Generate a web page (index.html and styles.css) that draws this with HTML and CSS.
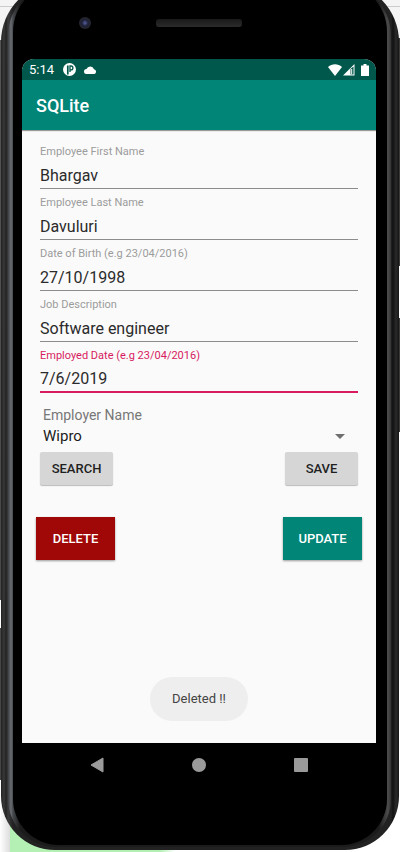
FILE: index.html
```html
<!DOCTYPE html>
<html lang="en">
<head>
<meta charset="utf-8">
<meta name="viewport" content="width=device-width, initial-scale=1">
<title>SQLite</title>
<link rel="stylesheet" href="styles.css">
</head>
<body>
<div class="desk">
  <div class="phone">
    <div class="rim">
      <div class="glass">
        <div class="top-bezel">
          <span class="camera"></span>
          <span class="speaker"></span>
        </div>
        <div class="screen">
          <div class="status">
            <span class="time">5:14</span>
            <svg width="13" height="13" viewBox="0 0 13 13" aria-hidden="true"><circle cx="6.5" cy="6.5" r="6.5" fill="#fff"/><path d="M4.800 11.500V2.500" fill="none" stroke="#00574b" stroke-width="1.700"/><path d="M7 9V3h1a1.900 1.900 0 0 1 0 3.800H7" fill="none" stroke="#00574b" stroke-width="1.300"/></svg>
            <svg width="13" height="8" viewBox="0 0 13 8" aria-hidden="true"><path d="M2.500 8a2.500 2.500 0 0 1 0-5A4 4 0 0 1 10 3.200A2.500 2.500 0 0 1 10.500 8Z" fill="#fff"/></svg>
            <span class="signals">
              <svg width="14" height="12" viewBox="0 0 14 12" aria-hidden="true"><path d="M0 3C4-.7 10-.7 14 3L7 12Z" fill="#fff"/></svg>
              <svg width="12" height="12" viewBox="0 0 12 12" aria-hidden="true"><path d="M0 11.500 11.500 0V11.500Z" fill="#fff"/><path d="M7.500 5v5.500h3V2.500Z" fill="#00574b"/><path d="M8.700 5v5.500" stroke="#fff"/></svg>
              <svg class="battery" width="8" height="12" viewBox="0 0 8 12" aria-hidden="true"><path d="M2.500 0h3v1.500H8V12H0V1.500h2.500Z" fill="#fff"/></svg>
            </span>
          </div>
          <header class="appbar"><h1>SQLite</h1></header>
          <form class="form">
            <div class="field"><label for="first">Employee First Name</label><input id="first" type="text" value="Bhargav"></div>
            <div class="field"><label for="last">Employee Last Name</label><input id="last" type="text" value="Davuluri"></div>
            <div class="field"><label for="dob">Date of Birth (e.g 23/04/2016)</label><input id="dob" type="text" value="27/10/1998"></div>
            <div class="field"><label for="job">Job Description</label><input id="job" type="text" value="Software engineer"></div>
            <div class="field active"><label for="date">Employed Date (e.g 23/04/2016)</label><input id="date" type="text" value="7/6/2019"></div>
            <div class="employer">
              <label for="employer">Employer Name</label>
              <div class="picker">
                <select id="employer"><option>Wipro</option></select>
                <svg width="10" height="5" viewBox="0 0 10 5" aria-hidden="true"><path d="M0 0h10L5 5Z" fill="#6f6f6f"/></svg>
              </div>
            </div>
            <div class="row"><button type="button" class="plain">SEARCH</button><button type="button" class="plain">SAVE</button></div>
            <div class="row wide"><button type="button" class="solid delete">DELETE</button><button type="button" class="solid update">UPDATE</button></div>
          </form>
          <div class="toast" role="status">Deleted !!</div>
        </div>
        <nav class="nav">
          <button type="button" aria-label="Back"><svg width="14" height="16" viewBox="0 0 14 16"><path d="M13 1v14L1 8Z" fill="#9a9a9a" stroke="#9a9a9a" stroke-linejoin="round"/></svg></button>
          <button type="button" aria-label="Home"><svg width="14" height="14" viewBox="0 0 14 14"><circle cx="7" cy="7" r="7" fill="#9a9a9a"/></svg></button>
          <button type="button" aria-label="Recent apps"><svg width="14" height="14" viewBox="0 0 14 14"><rect width="14" height="14" rx="1" fill="#9a9a9a"/></svg></button>
        </nav>
      </div>
    </div>
  </div>
</div>
</body>
</html>
```
FILE: styles.css
```css
* { box-sizing: border-box; }
body {
  margin: 0;
  font-family: Roboto, sans-serif;
  color: #2b2b2b;
  overflow: hidden;
}
.desk {
  min-height: 100vh;
  overflow: hidden;
  padding: 0 1px;
  background:
    linear-gradient(#fff, #fff) 0 600px / 2px 28px no-repeat,
    linear-gradient(#fff, #fff) 100% 266px / 3px 52px no-repeat,
    linear-gradient(#3b3937, #3b3937) 100% 38px / 3px 394px no-repeat,
    linear-gradient(#555, #444) 0 40px / 2px 740px no-repeat,
    linear-gradient(90deg, #b4f0b4 0, #b4f0b4 150px, #fff 165px) 10px 825px / 170px 27px no-repeat,
    linear-gradient(90deg, #fff, #ddd) 0 780px / 10px 72px no-repeat,
    linear-gradient(#f4f4f4 6px, #ccc 6px, #ccc 7px, #f4f4f4 7px, #f4f4f4 60px, #fff 60px);
}
.phone {
  margin-top: -18px;
  padding: 0 8px 3px 7px;
  border-radius: 60px 60px 54px 54px;
  background: linear-gradient(90deg, #222 0, #3a3838 3px, #222 5px, #3c3c3e 7px, #222 12px, #222 calc(100% - 8px), #111 calc(100% - 6px), #2a2a2a calc(100% - 3px), #161616);
}
.rim {
  padding: 0 4px 2px 5px;
  border-radius: 54px 54px 48px 48px;
  background: linear-gradient(90deg, #3c3e42, #6a6d72 3px, #44474b 5px, #1b1b1b 12px, #1b1b1b calc(100% - 12px), #4c4c4c calc(100% - 3px), #333);
}
.glass {
  padding: 18px 11px 68px 9px;
  border-radius: 50px 50px 46px 46px;
  background: #000;
}
.top-bezel {
  display: grid;
  grid-template-columns: 1fr 86px 1fr;
  align-items: center;
  height: 59px;
  padding: 0 0 13px;
}
.camera {
  justify-self: center;
  width: 12px;
  height: 12px;
  margin-right: 8px;
  border-radius: 50%;
  background: radial-gradient(circle, #4a4f86 1px, #1f2138 3px, #26262d 6px);
}
.speaker {
  height: 8px;
  border-radius: 3px;
  background: linear-gradient(#191919, #2b2b2b);
}
.screen {
  display: flex;
  flex-direction: column;
  min-height: 684px;
  background: #fafafa;
  border-radius: 12px 12px 0 0;
  overflow: hidden;
}
.status {
  display: flex;
  align-items: center;
  gap: 8px;
  padding: 0 7px;
  background: #00574b;
  color: #fff;
}
.time { font-size: 13px; line-height: 21px; margin-right: 1px; }
.signals { display: flex; gap: 1px; margin-left: auto; }
.battery { margin-left: 5px; }
.appbar {
  padding: 0 14px;
  background: #008577;
  color: #fff;
  box-shadow: 0 1px 1px #9a9a9a;
}
.appbar h1 { margin: 0; padding-top: 2px; font-size: 18px; font-weight: 500; line-height: 48px; }
.form { padding: 15px 18px 0; }
.field { height: 51px; }
.field label {
  display: block;
  font-size: 11px;
  line-height: 14px;
  color: #9c9c9c;
}
.field input {
  display: block;
  width: 100%;
  height: 30px;
  padding: 3px 0 0;
  border: 0;
  border-bottom: 1px solid #8c8c8c;
  border-radius: 0;
  background: none;
  color: #2b2b2b;
  font: 16px Roboto, sans-serif;
  outline: 0;
}
.field.active label { color: #d81b60; }
.field.active input { border-bottom: 2px solid #d81b60; }
.employer { padding: 5px 3px 0; }
.employer label { display: block; font-size: 14px; line-height: 20px; color: #777; }
.picker { display: flex; align-items: center; padding-right: 10px; }
.picker select {
  flex: 1;
  height: 22px;
  padding: 0;
  border: 0;
  appearance: none;
  background: none;
  color: #1c1c1c;
  font: 15px Roboto, sans-serif;
}
.row { display: flex; justify-content: space-between; margin-top: 5px; }
.row button { border: 0; font: 500 13px Roboto, sans-serif; }
.plain {
  width: 73px;
  height: 33px;
  padding: 0;
  border-radius: 2px;
  background: #d6d6d6;
  color: #1f1f1f;
  box-shadow: 0 1px 1px #bbb;
}
.row.wide { margin: 32px -4px 0; }
.solid { width: 79px; height: 43px; padding: 0; color: #fff; box-shadow: 0 1px 2px #999; }
.delete { background: #a00808; }
.update { background: #008577; }
.toast {
  align-self: center;
  margin: auto 0 22px;
  padding: 0 22px;
  border-radius: 22px;
  background: #eee;
  color: #444;
  font-size: 13px;
  line-height: 44px;
}
.nav { display: flex; justify-content: space-around; padding: 10px 24px 0; }
.nav button {
  display: grid;
  place-items: center;
  width: 24px;
  height: 24px;
  padding: 0;
  border: 0;
  background: none;
}
```
